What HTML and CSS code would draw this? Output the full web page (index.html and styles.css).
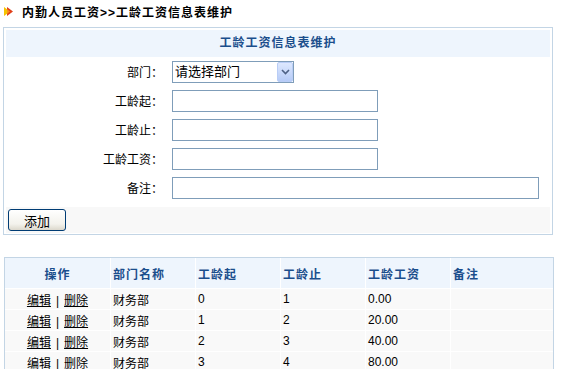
FILE: index.html
```html
<!DOCTYPE html>
<html lang="zh-CN">
<head>
    <meta charset="UTF-8">
    <meta name="viewport" content="width=device-width, initial-scale=1.0">
    <title>工龄工资信息表维护</title>
    <link rel="stylesheet" href="styles.css">
</head>
<body>
    <div class="crumb">
        <svg class="crumb-icon" width="10" height="9" viewBox="0 0 10 9">
            <polygon points="0,0 6,4.5 0,9" fill="#f5c400"/>
            <polygon points="3,0 9,4.5 3,9" fill="#e0401a"/>
            <polygon points="3,2 6,4.5 3,7" fill="#f7931e"/>
        </svg>
        <span>内勤人员工资&gt;&gt;工龄工资信息表维护</span>
    </div>

    <form class="panel" id="wageForm">
        <div class="panel-title">工龄工资信息表维护</div>

        <div class="row">
            <label for="dept">部门：</label>
            <div class="field">
                <span class="select-wrap">
                    <select id="dept" name="dept">
                        <option>请选择部门</option>
                        <option>财务部</option>
                    </select>
                    <span class="select-btn">
                        <svg width="9" height="6" viewBox="0 0 9 6"><polyline points="1,1 4.5,4.5 8,1" fill="none" stroke="#4d6185" stroke-width="1.6"/></svg>
                    </span>
                </span>
            </div>
        </div>

        <div class="row">
            <label for="start">工龄起：</label>
            <div class="field"><input type="text" id="start" name="start"></div>
        </div>

        <div class="row">
            <label for="end">工龄止：</label>
            <div class="field"><input type="text" id="end" name="end"></div>
        </div>

        <div class="row">
            <label for="wage">工龄工资：</label>
            <div class="field"><input type="text" id="wage" name="wage"></div>
        </div>

        <div class="row">
            <label for="memo">备注：</label>
            <div class="field"><input type="text" id="memo" name="memo" class="wide"></div>
        </div>

        <div class="actions">
            <button type="button">添加</button>
        </div>
    </form>

    <table class="list">
        <colgroup>
            <col style="width:106px">
            <col style="width:85px">
            <col style="width:85px">
            <col style="width:85px">
            <col style="width:85px">
            <col>
        </colgroup>
        <thead>
            <tr>
                <th class="ops">操作</th>
                <th>部门名称</th>
                <th>工龄起</th>
                <th>工龄止</th>
                <th>工龄工资</th>
                <th>备注</th>
            </tr>
        </thead>
        <tbody>
            <tr>
                <td class="ops"><a href="#">编辑</a><span class="sep">|</span><a href="#">删除</a></td>
                <td>财务部</td><td>0</td><td>1</td><td>0.00</td><td></td>
            </tr>
            <tr>
                <td class="ops"><a href="#">编辑</a><span class="sep">|</span><a href="#">删除</a></td>
                <td>财务部</td><td>1</td><td>2</td><td>20.00</td><td></td>
            </tr>
            <tr>
                <td class="ops"><a href="#">编辑</a><span class="sep">|</span><a href="#">删除</a></td>
                <td>财务部</td><td>2</td><td>3</td><td>40.00</td><td></td>
            </tr>
            <tr>
                <td class="ops"><a href="#">编辑</a><span class="sep">|</span><a href="#">删除</a></td>
                <td>财务部</td><td>3</td><td>4</td><td>80.00</td><td></td>
            </tr>
        </tbody>
    </table>
</body>
</html>
```

FILE: styles.css
```css
body {
    font-family: "Liberation Sans", "Noto Sans CJK SC", sans-serif;
    font-size: 12px;
    color: #000;
    background-color: #fff;
    margin: 0;
    padding: 0;
}

.crumb {
    display: flex;
    align-items: center;
    height: 22px;
    padding-left: 4px;
    font-weight: bold;
    letter-spacing: 1px;
}

.crumb-icon {
    margin-right: 8px;
}

.panel {
    width: 550px;
    box-sizing: border-box;
    margin: 5px 0 0 3px;
    padding: 2px 2px 1px 2px;
    border: 1px solid #c3d5e5;
}

.panel-title {
    height: 27px;
    line-height: 27px;
    background-color: #eef5fd;
    color: #1b4e8c;
    font-weight: bold;
    letter-spacing: 1px;
    text-align: center;
}

.row {
    display: flex;
    align-items: center;
    height: 29px;
}

.row label {
    width: 160px;
    padding-right: 3px;
    box-sizing: border-box;
    text-align: right;
}

.field {
    padding-left: 6px;
    display: flex;
}

input {
    width: 206px;
    height: 22px;
    box-sizing: border-box;
    border: 1px solid #7f9db9;
    padding: 2px 3px;
    font: inherit;
}

input.wide {
    width: 367px;
}

.select-wrap {
    position: relative;
    display: inline-block;
}

select {
    width: 122px;
    height: 22px;
    box-sizing: border-box;
    border: 1px solid #7f9db9;
    border-radius: 0;
    padding: 0 2px;
    background-color: #fff;
    font: inherit;
    font-size: 13px;
    color: #000;
    -webkit-appearance: none;
    appearance: none;
}

.select-btn {
    position: absolute;
    top: 1px;
    right: 1px;
    width: 16px;
    height: 20px;
    box-sizing: border-box;
    border: 1px solid #b9cdf6;
    border-radius: 2px;
    background: linear-gradient(#dde8fe, #b6cbf7);
    display: flex;
    align-items: center;
    justify-content: center;
    pointer-events: none;
}

.actions {
    height: 26px;
    margin-top: 5px;
    background-color: #f8f8f8;
}

button {
    width: 58px;
    height: 22px;
    margin: 2px 0 0 2px;
    border: 1px solid #003c74;
    border-radius: 3px;
    background: linear-gradient(#ffffff, #f3f2ec 70%, #dcd8cc);
    font: inherit;
    font-size: 13px;
    color: #000;
    cursor: pointer;
}

.list {
    width: 550px;
    margin: 22px 0 0 4px;
    border: 1px solid #c3d5e5;
    border-spacing: 0;
    table-layout: fixed;
}

.list th,
.list td {
    border-right: 1px solid #fff;
    border-bottom: 1px solid #fff;
    padding: 0 2px;
    text-align: left;
    white-space: nowrap;
}

.list th:last-child,
.list td:last-child {
    border-right: none;
}

.list th {
    height: 30px;
    background-color: #eef5fd;
    color: #1b4e8c;
    font-weight: bold;
    letter-spacing: 1px;
}

.list td {
    height: 20px;
    background-color: #f9f9f9;
}

.list .ops {
    text-align: center;
}

.list .sep {
    margin: 0 5px;
}

.list a {
    color: #000;
}
```
